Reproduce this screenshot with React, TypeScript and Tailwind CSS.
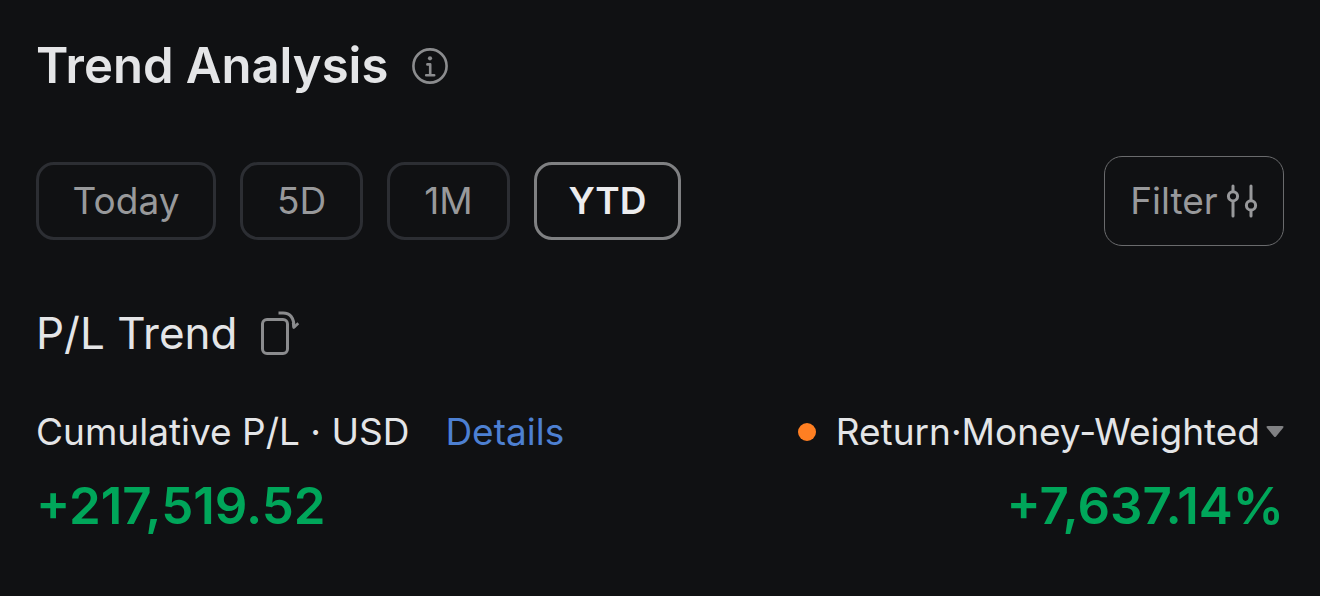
import { useState } from 'react';

const periods = [
  { label: 'Today', width: 'w-[180px]' },
  { label: '5D', width: 'w-[123px]' },
  { label: '1M', width: 'w-[123px]' },
  { label: 'YTD', width: 'w-[147px]' },
];

function InfoIcon() {
  return (
    <svg width="36" height="36" viewBox="0 0 36 36" fill="none" stroke="#8b8c8e" aria-hidden="true">
      <circle cx="18" cy="18" r="16.6" strokeWidth="2.6" />
      <circle cx="18" cy="10.3" r="2.1" fill="#8b8c8e" stroke="none" />
      <path d="M15.4 16.4h2.800v10.800M14.200 27.200h8" strokeWidth="2.6" strokeLinecap="round" strokeLinejoin="round" />
    </svg>
  );
}

function SlidersIcon() {
  return (
    <svg width="32" height="34" viewBox="0 0 32 34" fill="none" stroke="#98999b" strokeWidth="3" strokeLinecap="round" aria-hidden="true">
      <path d="M7 2v5.5M7 17.5V32M25 2v14.5M25 26.5V32" />
      <circle cx="7" cy="12.3" r="4.6" />
      <circle cx="25" cy="21.4" r="4.6" />
    </svg>
  );
}

function RotateIcon() {
  return (
    <svg width="40" height="46" viewBox="0 0 40 46" fill="none" stroke="#8b8c8e" strokeWidth="3" aria-hidden="true">
      <rect x="2.5" y="9.5" width="25" height="34" rx="4.5" />
      <path d="M18.500 3h4.500C30.500 3 34 8 34 17.500" />
      <path d="M38.300 13.300l-4.500 4.200-.7-4.800" strokeWidth="2.6" strokeLinejoin="round" />
    </svg>
  );
}

export default function App() {
  const [active, setActive] = useState('YTD');

  return (
    <main className="min-h-screen bg-[#101113] px-9 pt-9 pb-14 font-['Inter',sans-serif] text-[#e4e5e7]">
      <header className="flex h-15 items-center gap-6">
        <h1 className="text-[49px] leading-[60px] font-semibold whitespace-nowrap">Trend Analysis</h1>
        <button type="button" aria-label="About trend analysis">
          <InfoIcon />
        </button>
      </header>

      <div className="mt-15 flex items-center justify-between">
        <div className="flex gap-6">
          {periods.map((period) => (
            <button
              key={period.label}
              type="button"
              aria-pressed={active === period.label}
              onClick={() => setActive(period.label)}
              className={`h-[78px] rounded-[18px] border-3 text-[37px] leading-[48px] ${period.width} ${
                active === period.label
                  ? 'border-[#7f8082] font-semibold text-[#ececee]'
                  : 'border-[#2c2e33] text-[#98999b]'
              }`}
            >
              {period.label}
            </button>
          ))}
        </div>
        <button
          type="button"
          className="flex h-[90px] w-[180px] items-center justify-center gap-2 rounded-[18px] border border-[#6a6b6d] text-[37px] leading-[48px] text-[#98999b]"
        >
          Filter
          <SlidersIcon />
        </button>
      </div>

      <div className="mt-[57px] flex h-15 items-center gap-[22px]">
        <h2 className="text-[44px] leading-[60px] whitespace-nowrap">P/L Trend</h2>
        <button type="button" aria-label="Rotate chart">
          <RotateIcon />
        </button>
      </div>

      <div className="mt-[45px] flex justify-between">
        <section>
          <div className="flex items-center gap-9 text-[37px] leading-[48px] whitespace-nowrap">
            <h3>Cumulative P/L · USD</h3>
            <a href="#details" className="text-[#4d80d2]">
              Details
            </a>
          </div>
          <p className="mt-5 text-[51px] leading-[60px] font-semibold text-[#00a65a]">+217,519.52</p>
        </section>

        <section className="text-right">
          <div className="flex items-center justify-end gap-5 text-[37px] leading-[48px]">
            <span className="size-[18px] rounded-full bg-[#ff7f22]" />
            <div className="relative flex items-center">
              <select
                aria-label="Return method"
                className="field-sizing-content appearance-none bg-[#101113] pr-6 outline-none"
                defaultValue="money"
              >
                <option value="money">Return·Money-Weighted</option>
                <option value="time">Return·Time-Weighted</option>
              </select>
              <svg className="pointer-events-none absolute right-0" width="18" height="12" viewBox="0 0 18 12" aria-hidden="true">
                <path d="M2 0h14q2.500 0 1 2l-7 8.500q-1 1-2 0L1 2Q-.5 0 2 0z" fill="#808183" />
              </svg>
            </div>
          </div>
          <p className="mt-5 text-[51px] leading-[60px] font-semibold text-[#00a65a]">+7,637.14%</p>
        </section>
      </div>
    </main>
  );
}
